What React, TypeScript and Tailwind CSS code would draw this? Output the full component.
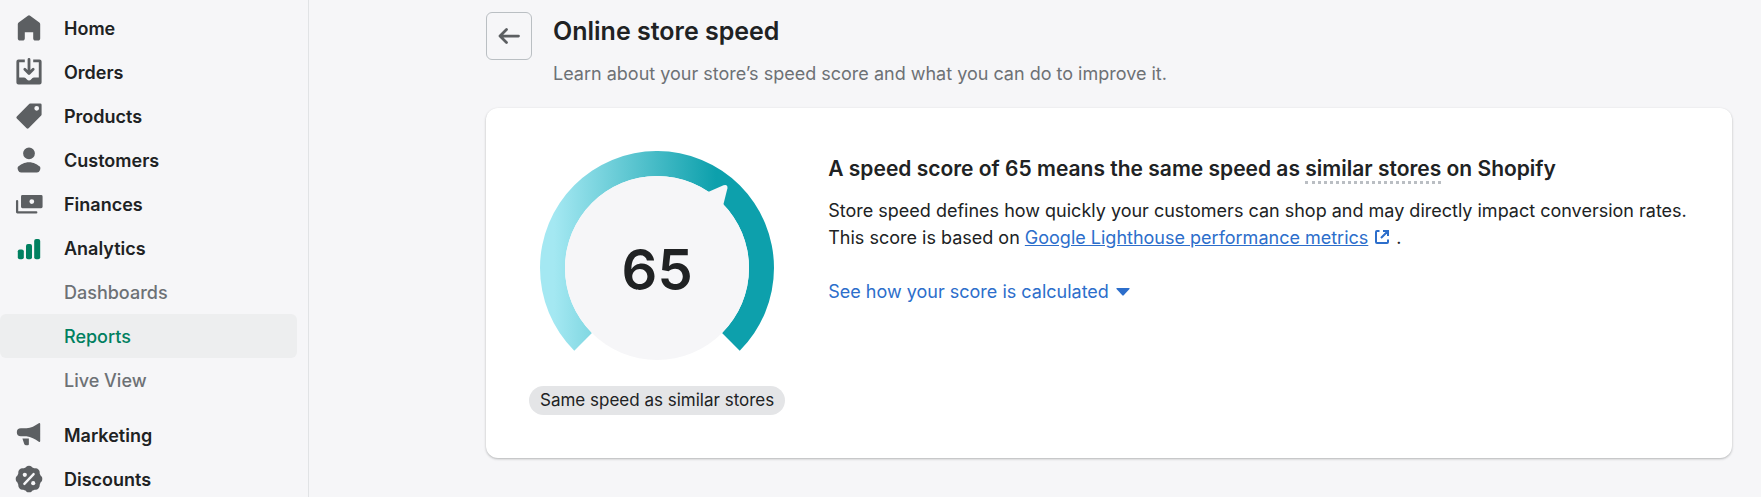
import type { ReactNode } from 'react';

type NavItem = {
  label: string;
  icon: ReactNode;
  active?: boolean;
  children?: { label: string; selected?: boolean }[];
};

const NAV: NavItem[] = [
  {
    label: 'Home',
    icon: (
      <path d="M18 7.261V17.5c0 .841-.672 1.5-1.5 1.5h-2c-.828 0-1.5-.659-1.5-1.5V13H7v4.477C7 18.318 6.328 19 5.5 19h-2c-.828 0-1.5-.682-1.5-1.523V7.261a1.5 1.5 0 0 1 .615-1.21l6.59-4.82a1.481 1.481 0 0 1 1.59 0l6.59 4.82A1.5 1.5 0 0 1 18 7.26z" />
    ),
  },
  {
    label: 'Orders',
    icon: (
      <>
        <path d="M11 1a1 1 0 1 0-2 0v7.586L7.707 7.293a1 1 0 0 0-1.414 1.414l3 3a1 1 0 0 0 1.414 0l3-3a1 1 0 0 0-1.414-1.414L11 8.586V1z" />
        <path d="M3 14V3h4V1H2.5A1.5 1.5 0 0 0 1 2.5v15A1.5 1.5 0 0 0 2.5 19h15a1.5 1.5 0 0 0 1.5-1.5v-15A1.5 1.5 0 0 0 17.5 1H13v2h4v11h-3.5c-.775 0-1.388.662-1.926 1.244l-.11.12A1.994 1.994 0 0 1 10 16a1.994 1.994 0 0 1-1.463-.637l-.111-.12C7.888 14.664 7.275 14 6.5 14H3z" />
      </>
    ),
  },
  {
    label: 'Products',
    icon: (
      <path
        fillRule="evenodd"
        d="M10.293 1.293A1 1 0 0 1 11 1h7a1 1 0 0 1 1 1v7a1 1 0 0 1-.293.707l-9 9a1 1 0 0 1-1.414 0l-7-7a1 1 0 0 1 0-1.414l9-9zM15.5 6.200a1.700 1.700 0 1 0 0-3.400 1.700 1.700 0 0 0 0 3.400z"
      />
    ),
  },
  {
    label: 'Customers',
    icon: (
      <path d="M14.22 5.22a4.22 4.22 0 1 1-8.44 0 4.22 4.22 0 0 1 8.44 0zM2.53 14.469c1.385-1.09 4.141-2.853 7.474-2.853 3.332 0 6.089 1.764 7.474 2.853.618.486.81 1.308.567 2.056l-.333 1.02A2.11 2.11 0 0 1 15.706 19H4.301a2.11 2.11 0 0 1-2.005-1.455l-.333-1.02c-.245-.748-.052-1.57.567-2.056z" />
    ),
  },
  {
    label: 'Finances',
    icon: (
      <>
        <path
          fillRule="evenodd"
          d="M5.3 3.6h13.4a1 1 0 0 1 1 1v7.4a1 1 0 0 1-1 1H5.3a1 1 0 0 1-1-1V4.6a1 1 0 0 1 1-1zM12 10a1.7 1.7 0 1 0 0-3.4A1.7 1.7 0 0 0 12 10z"
        />
        <path d="M.7 7.9a.8.8 0 0 1 1.6 0v7.3h12.9a.8.8 0 0 1 0 1.6H1.7a1 1 0 0 1-1-1z" />
      </>
    ),
  },
  {
    label: 'Analytics',
    active: true,
    icon: (
      <>
        <rect x="2" y="11" width="4.3" height="7" rx="1.4" />
        <rect x="7.85" y="7.2" width="4.3" height="10.8" rx="1.4" />
        <rect x="13.7" y="3.6" width="4.3" height="14.4" rx="1.4" />
      </>
    ),
    children: [{ label: 'Dashboards' }, { label: 'Reports', selected: true }, { label: 'Live View' }],
  },
  {
    label: 'Marketing',
    icon: (
      <>
        <path d="M17 1.6a.7.7 0 0 1 1 .6v12a.7.7 0 0 1-1 .6c-2.7-2-5.6-3.5-8.8-3.9H4.2A2.9 2.9 0 0 1 4.2 5.100h4C11.4 5 14.3 3.5 17 1.6z" />
        <path d="M5.3 12.5h4.6v4.1a.8.8 0 0 1-.8.8H8a1.5 1.5 0 0 1-1.400-1z" />
      </>
    ),
  },
  {
    label: 'Discounts',
    icon: (
      <>
        <circle cx="10" cy="10" r="8.600" />
        {[0, 45, 90, 135, 180, 225, 270, 315].map(a => (
          <circle key={a} cx="10" cy="3.100" r="2.600" transform={`rotate(${a} 10 10)`} />
        ))}
        <g className="fill-[#f6f6f8] stroke-[#f6f6f8]">
          <circle cx="7" cy="7" r="1.500" stroke="none" />
          <circle cx="13" cy="13" r="1.500" stroke="none" />
          <path d="M13.300 6.500l-6.600 7" strokeWidth="1.700" strokeLinecap="round" />
        </g>
      </>
    ),
  },
];

function Sidebar() {
  return (
    <nav className="w-[309px] shrink-0 border-r border-[#e1e3e5] pt-1.5">
      <ul>
        {NAV.map(item => (
          <li key={item.label}>
            <a href="#" className="flex h-11 items-center gap-[21px] pl-[15px] font-semibold">
              <svg
                viewBox="0 0 20 20"
                className={`size-7 shrink-0 ${item.active ? 'fill-[#008060]' : 'fill-[#5c5f62]'}`}
                aria-hidden="true"
              >
                {item.icon}
              </svg>
              {item.label}
            </a>
            {item.children && (
              <ul className="mb-[11px]">
                {item.children.map(c => (
                  <li key={c.label} className="mr-[11px]">
                    <a
                      href="#"
                      className={`flex h-11 items-center rounded-md pl-16 font-medium ${
                        c.selected ? 'bg-[#edeeef] text-[#008060]' : 'text-[#6d7175]'
                      }`}
                    >
                      {c.label}
                    </a>
                  </li>
                ))}
              </ul>
            )}
          </li>
        ))}
      </ul>
    </nav>
  );
}

function Gauge({ score }: { score: number }) {
  return (
    <div className="relative">
      <svg viewBox="0 0 234 210" className="h-[210px] w-[234px]" aria-hidden="true">
        <defs>
          <linearGradient id="ring" gradientUnits="userSpaceOnUse" x1="14" y1="117" x2="176" y2="117">
            <stop offset="0" stopColor="#a4e8f2" />
            <stop offset="1" stopColor="#0da0ac" />
          </linearGradient>
        </defs>
        <path
          d="M34.27 199.73A117 117 0 1 1 199.73 199.73L182.05 182.05A92 92 0 1 0 51.95 182.05Z"
          fill="url(#ring)"
        />
        <circle cx="117" cy="117" r="92" fill="#f6f6f8" />
        <path d="M167 41.5L183.5 34.2Q188 32.8 187.4 37.5L183 55L172 60Z" fill="#f6f6f8" />
      </svg>
      <p className="absolute inset-x-0 top-[91px] text-center text-[56px] leading-[56px] font-semibold">{score}</p>
    </div>
  );
}

export default function App() {
  return (
    <div className="flex h-screen overflow-hidden bg-[#f6f6f8] font-['Inter',sans-serif] text-lg leading-[27px] text-[#202223]">
      <Sidebar />

      <main className="min-w-0 flex-1 pt-3 pr-[29px] pl-[177px]">
        <header className="flex items-start gap-[21px]">
          <button
            type="button"
            aria-label="Back"
            className="flex h-12 w-[46px] shrink-0 items-center justify-center rounded-md border border-[#babfc3]"
          >
            <svg
              viewBox="0 0 24 24"
              className="size-6 fill-none stroke-[#5c5f62] stroke-[2.75]"
              strokeLinecap="round"
              strokeLinejoin="round"
              aria-hidden="true"
            >
              <path d="M21.500 12H3.500M9.500 5.500L3 12l6.500 6.500" />
            </svg>
          </button>
          <div>
            <h1 className="text-[25px] leading-[38px] font-semibold">Online store speed</h1>
            <p className="mt-2.5 text-[#6d7175]">
              Learn about your store’s speed score and what you can do to improve it.
            </p>
          </div>
        </header>

        <section className="mt-[21px] flex gap-[43px] rounded-xl bg-white p-[43px] shadow-[0_1px_3px_rgba(23,24,24,0.15),0_1px_2px_rgba(0,0,0,0.15)]">
          <div className="flex shrink-0 flex-col items-center gap-[25px]">
            <Gauge score={65} />
            <span className="rounded-full bg-[#e4e5e7] px-[11px] text-[17px] leading-[29px]">
              Same speed as similar stores
            </span>
          </div>

          <div>
            <h2 className="text-[21px] leading-[36px] font-semibold">
              A speed score of 65 means the same speed as{' '}
              <span className="border-b-3 border-dotted border-[#babec3]">similar stores</span> on Shopify
            </h2>
            <p className="mt-2.5">
              Store speed defines how quickly your customers can shop and may directly impact conversion rates.
              <br />
              This score is based on{' '}
              <a href="#" className="text-[#2c6ecb]">
                <span className="underline">Google Lighthouse performance metrics</span>
                <svg
                  viewBox="0 0 14 14"
                  className="mx-[7px] inline size-3.5 fill-none stroke-current stroke-2 align-baseline"
                  aria-hidden="true"
                >
                  <path d="M4.5 1H2a1 1 0 0 0-1 1v10a1 1 0 0 0 1 1h10a1 1 0 0 0 1-1V9.500M8 1h5v5M13 1L6 8" />
                </svg>
              </a>
              .
            </p>
            <button type="button" className="mt-[27px] flex items-center gap-[7px] text-[#2c6ecb]">
              See how your score is calculated
              <svg viewBox="0 0 14 8" className="h-2 w-3.5 fill-current" aria-hidden="true">
                <path d="M.9 0h12.2q.9.200.4 1L7.700 7.300q-.700.700-1.400 0L.5 1Q0 .2.900 0z" />
              </svg>
            </button>
          </div>
        </section>
      </main>
    </div>
  );
}
